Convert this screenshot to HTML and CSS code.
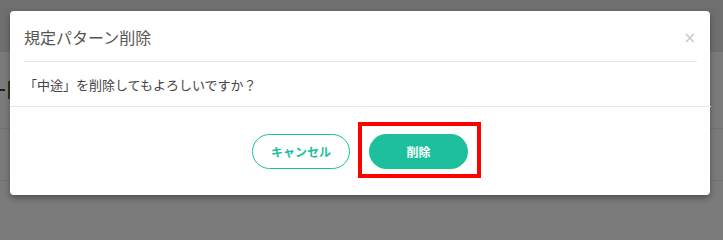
FILE: index.html
```html
<!DOCTYPE html>
<html lang="ja">
<head>
<meta charset="utf-8">
<link rel="stylesheet" href="styles.css">
</head>
<body>
<div class="page">
  <div class="page-top"></div>
  <div class="page-row row-a"><span class="behind-dash"></span><span class="behind-mark"></span></div>
  <div class="page-row row-b"></div>
  <div class="page-row row-c"></div>
</div>
<div class="modal">
  <div class="modal-header">
    <h2 class="modal-title">規定パターン削除</h2>
    <span class="modal-close">×</span>
  </div>
  <div class="modal-body">「中途」を削除してもよろしいですか？</div>
  <div class="modal-footer">
    <button class="btn btn-outline">キャンセル</button>
    <div class="highlight-wrap">
      <button class="btn btn-fill">削除</button>
      <span class="highlight"></span>
    </div>
  </div>
</div>
</body>
</html>
```
FILE: styles.css
```css
* { box-sizing: border-box; }
html, body { margin: 0; padding: 0; }
html { height: 209px; overflow: hidden; }
body {
  width: 723px;
  height: 209px;
  overflow: hidden;
  position: relative;
  background: #7b7b7b;
  font-family: "Noto Sans CJK JP", "Noto Sans", sans-serif;
}
.page-top { height: 52px; background: #6f6f6f; }
.page-row { height: 52px; border-bottom: 1px solid #717171; position: relative; }
.row-a { height: 77px; }
.behind-dash {
  position: absolute;
  left: 0;
  top: 37px;
  width: 5px;
  height: 2px;
  background: #1e1e1e;
}
.behind-mark {
  position: absolute;
  left: 8px;
  top: 29px;
  width: 3px;
  height: 18px;
  background: #3a3024;
}
.modal {
  position: absolute;
  left: 10px;
  top: 11px;
  width: 700px;
  height: 184px;
  background: #fff;
  border-radius: 4px;
  box-shadow: 0 3px 6px rgba(0,0,0,0.35);
  display: flex;
  flex-direction: column;
}
.modal-header {
  height: 51px;
  margin: 0 13px 0 14px;
  border-bottom: 1px solid #e3e3e3;
  display: flex;
  align-items: center;
  justify-content: space-between;
}
.modal-title {
  margin: 0;
  padding-top: 2px;
  font-size: 16px;
  font-weight: 400;
  color: #555;
}
.modal-close {
  font-family: "DejaVu Sans", sans-serif;
  font-size: 15px;
  line-height: 1;
  color: #c8c8c8;
  margin-right: 1px;
  margin-top: 4px;
}
.modal-body {
  height: 45px;
  padding: 0 14px;
  display: flex;
  align-items: center;
  font-size: 13px;
  color: #444;
  border-bottom: 1px solid #e6e6e6;
  width: 701px;
}
.modal-footer {
  flex: 1;
  display: flex;
  justify-content: center;
  align-items: flex-start;
  gap: 19px;
  padding-top: 27px;
}
.btn {
  height: 35px;
  border-radius: 18px;
  font-family: "Noto Sans CJK JP", sans-serif;
  font-size: 12px;
  font-weight: 700;
  cursor: pointer;
  padding: 0;
}
.btn-outline {
  width: 98px;
  background: #fff;
  border: 1px solid #1dbf9c;
  color: #1dbf9c;
}
.btn-fill {
  width: 99px;
  background: #1dbf9c;
  border: none;
  color: #fff;
}
.highlight-wrap { position: relative; display: flex; }
.highlight {
  position: absolute;
  left: -11px;
  top: -12px;
  width: 123px;
  height: 56px;
  border: 4px solid #ff0000;
}
```
